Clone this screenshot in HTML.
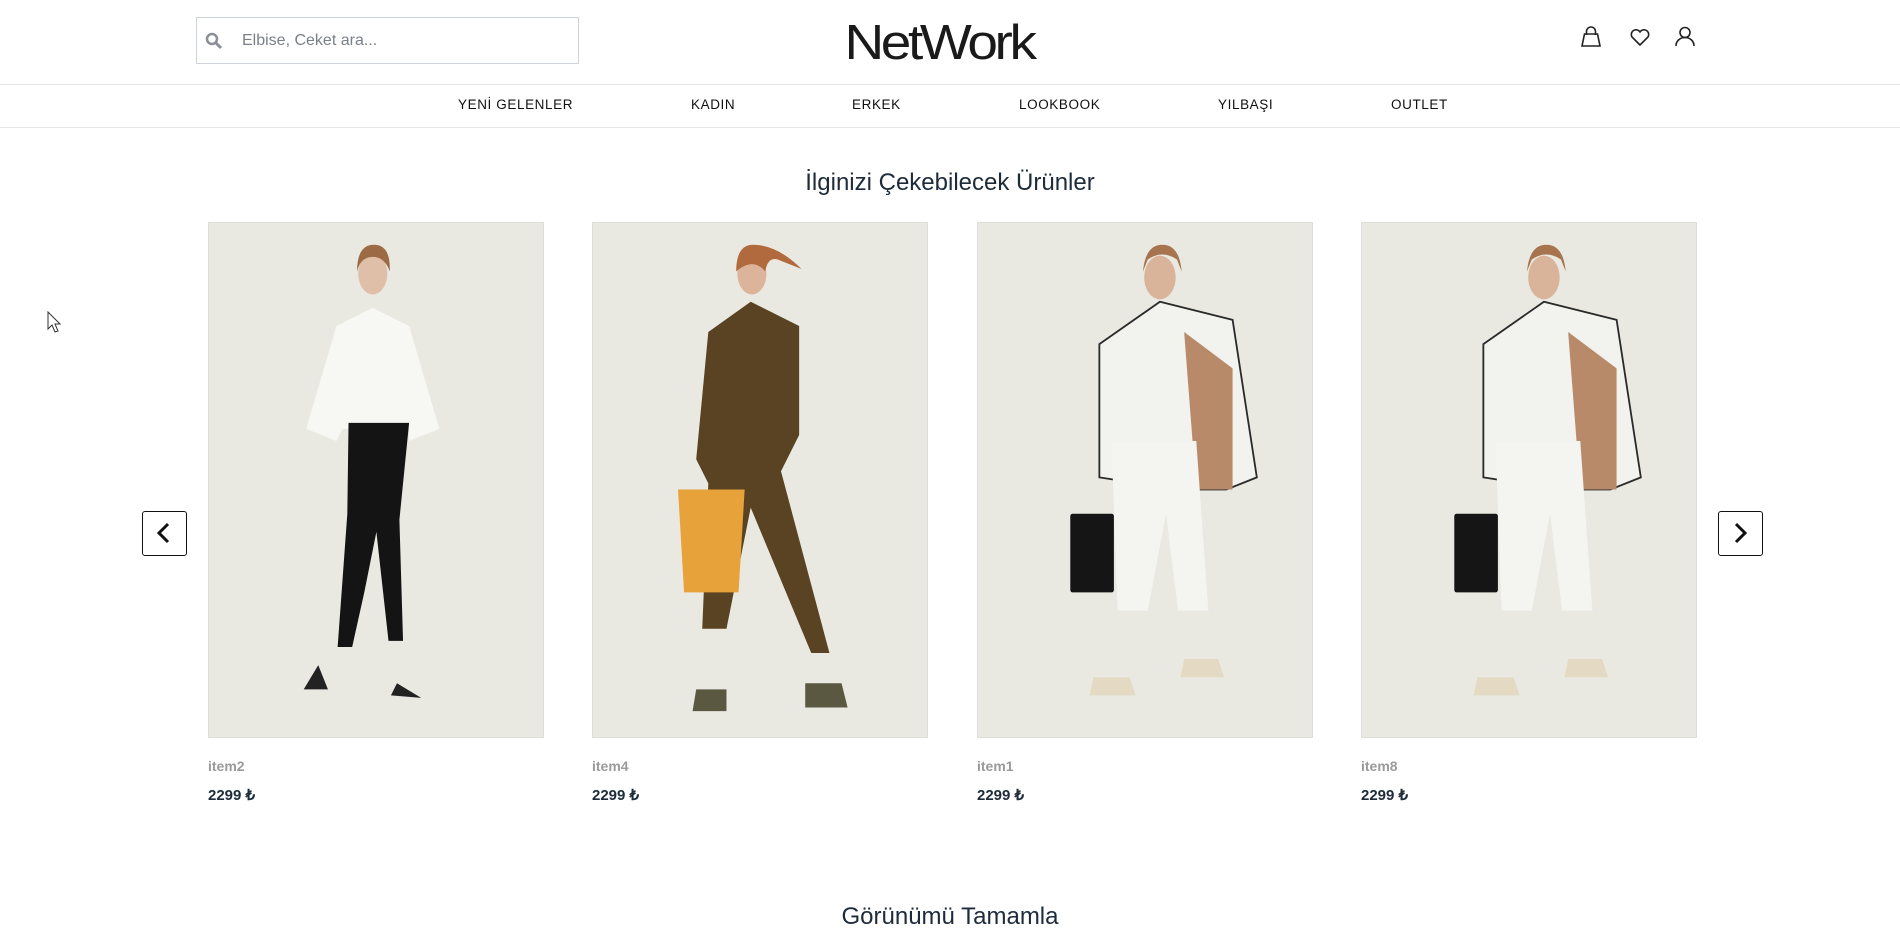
<!DOCTYPE html>
<html><head><meta charset="utf-8"><style>
*{margin:0;padding:0;box-sizing:border-box}
body{width:1900px;height:938px;overflow:hidden;background:#fff;font-family:"Liberation Sans",sans-serif;position:relative}
.abs{position:absolute}
.search{left:196px;top:17px;width:383px;height:47px;border:1px solid #cfd4dc}
.search span{position:absolute;left:45px;top:14px;font-size:16px;color:#7a7f88}
.logo{left:0;width:1878px;top:12px;text-align:center;font-size:55px;color:#1a1a1a;letter-spacing:-3.4px;line-height:60px;transform:scaleY(0.9);transform-origin:50% 50%}
.line{left:0;width:1900px;height:1px;background:#e6e6e6}
.nav{top:97px;font-size:13.5px;letter-spacing:0.6px;color:#111}
h2{position:absolute;left:0;width:1900px;text-align:center;font-weight:normal;font-size:24px;color:#1d2b3a}
.card{width:336px;height:516px;top:222px;border:1px solid #ddd;background:#e9e9e2;overflow:hidden}
.lbl{font-size:14px;color:#9a9a9a;font-weight:bold;top:758px}
.price{font-size:15px;color:#1d2b3a;font-weight:bold;top:786px}
.arrow{width:45px;height:45px;border:1.5px solid #111;border-radius:3px;top:511px;background:#fff}
</style></head><body>
<div class="abs search"><svg class="abs" style="left:8px;top:14px" width="18" height="18" viewBox="0 0 18 18"><circle cx="7" cy="7" r="5" fill="none" stroke="#8a8f98" stroke-width="2.5"/><path d="M11 11l5 5" stroke="#8a8f98" stroke-width="3"/></svg><span>Elbise, Ceket ara...</span></div>
<div class="abs logo">NetWork</div>
<svg class="abs" style="left:1578px;top:25px" width="125" height="24" viewBox="0 0 125 24">
<g fill="none" stroke="#222" stroke-width="1.6">
<path d="M4 21h18l-2.5-12h-13z"/><path d="M8.5 10V6.5a4.5 4.5 0 0 1 9 0V10"/>
<path d="M62 20l-8-8a4.5 4.5 0 0 1 8-5 4.5 4.5 0 0 1 8 5z"/>
<circle cx="107" cy="7.5" r="5"/><path d="M98 21c0-5 4-8.5 9-8.5s9 3.5 9 8.5"/>
</g></svg>
<div class="abs line" style="top:84px"></div>
<div class="abs line" style="top:127px"></div>
<div class="abs nav" style="left:458px">YENİ GELENLER</div>
<div class="abs nav" style="left:691px">KADIN</div>
<div class="abs nav" style="left:852px">ERKEK</div>
<div class="abs nav" style="left:1019px">LOOKBOOK</div>
<div class="abs nav" style="left:1218px">YILBAŞI</div>
<div class="abs nav" style="left:1391px">OUTLET</div>
<h2 style="top:169px">İlginizi Çekebilecek Ürünler</h2>
<svg width="0" height="0" style="position:absolute"><defs>
<symbol id="w" viewBox="0 0 277 426">
<ellipse cx="150" cy="45" rx="13" ry="18" fill="#d9b49a"/><path d="M136 40q2-22 16-22t16 22l-4-10q-12-8-24 0z" fill="#a8744f"/>
<path d="M100 100l50-35 60 15 20 130-25 10-40 0-65-10z" fill="#f2f2ee" stroke="#2a2a2a" stroke-width="1.5"/>
<path d="M170 90l40 30 0 100-30 0z" fill="#b88a6a"/>
<path d="M110 180l70 0 10 140-25 0-10-80-15 80-25 0z" fill="#f4f4f1"/>
<rect x="76" y="240" width="36" height="65" rx="2" fill="#151515"/>
<path d="M95 375h30l5 15h-38z M170 360h28l5 15h-36z" fill="#e4dac4"/>
</symbol></defs></svg>
<div class="abs card" style="left:208px"><svg width="336" height="516" viewBox="0 0 277 426">
<ellipse cx="135" cy="42" rx="12" ry="17" fill="#e0bfa8"/><path d="M122 40q0-22 14-22t13 22q-4-12-14-12t-13 12z" fill="#9c6b46"/>
<path d="M105 85l30-15 30 15 25 85-25 10 0-10-55 0-5 10-25-10z" fill="#f7f7f4"/>
<path d="M115 165h50l-8 80 3 100-12 0-10-90-10 50-10 45-12 0 8-110z" fill="#141414"/>
<path d="M78 385l12-20 8 20zM150 390l5-10 20 12z" fill="#222"/>
</svg></div>
<div class="abs card" style="left:592px"><svg width="336" height="516" viewBox="0 0 277 426">
<ellipse cx="131" cy="42" rx="12" ry="17" fill="#dcb49a"/><path d="M118 40q0-22 14-22 20 0 40 20l-20-8q-8-2-10 10-10-12-24 0z" fill="#b06a3d"/>
<path d="M95 90l35-25 40 20 0 90-15 30 40 150-15 0-50-120-20 100-20 0 5-120-10-20z" fill="#5a4322"/>
<path d="M70 220h55l-5 85h-45z" fill="#e8a23a"/>
<path d="M85 385h25v18h-28zM175 380h30l5 20h-35z" fill="#5b5842"/>
</svg></div>
<div class="abs card" style="left:977px"><svg width="336" height="516"><use href="#w"/></svg></div>
<div class="abs card" style="left:1361px"><svg width="336" height="516"><use href="#w"/></svg></div>
<div class="abs lbl" style="left:208px">item2</div><div class="abs price" style="left:208px">2299 ₺</div>
<div class="abs lbl" style="left:592px">item4</div><div class="abs price" style="left:592px">2299 ₺</div>
<div class="abs lbl" style="left:977px">item1</div><div class="abs price" style="left:977px">2299 ₺</div>
<div class="abs lbl" style="left:1361px">item8</div><div class="abs price" style="left:1361px">2299 ₺</div>
<div class="abs arrow" style="left:142px"><svg width="42" height="42" viewBox="0 0 42 42"><path d="M25 12l-9 9 9 9" fill="none" stroke="#111" stroke-width="3"/></svg></div>
<div class="abs arrow" style="left:1718px"><svg width="42" height="42" viewBox="0 0 42 42"><path d="M17 12l9 9-9 9" fill="none" stroke="#111" stroke-width="3"/></svg></div>
<h2 style="top:903px">Görünümü Tamamla</h2>
<svg class="abs" style="left:47px;top:311px" width="14" height="22" viewBox="0 0 14 22"><path d="M1 1v17l4-4 3 7 3-1-3-7h5z" fill="#fff" stroke="#333"/></svg>
</body></html>
